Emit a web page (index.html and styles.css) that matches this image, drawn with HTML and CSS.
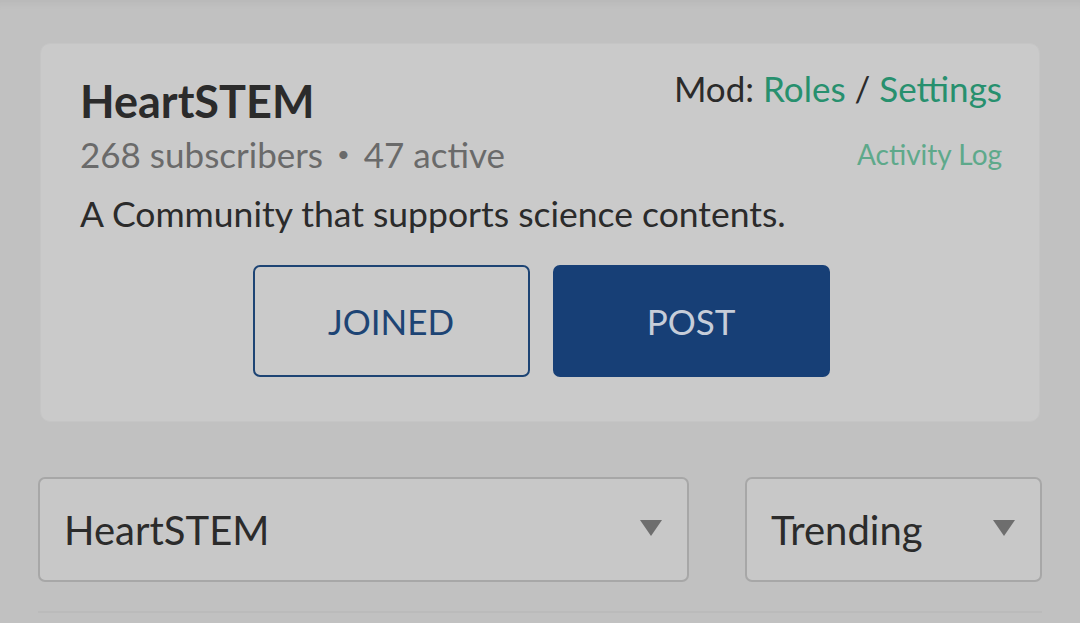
FILE: index.html
```html
<!DOCTYPE html>
<html>
<head>
<meta charset="utf-8">
<link rel="stylesheet" href="styles.css">
</head>
<body>
<div class="page">
  <section class="card">
    <div class="card-head">
      <div class="info">
        <h1 class="title">HeartSTEM</h1>
        <div class="stats"><span>268 subscribers</span><span class="dot">•</span><span>47 active</span></div>
      </div>
      <div class="mod">
        <div class="mod-links">Mod: <a class="link">Roles</a> / <a class="link">Settings</a></div>
        <a class="log">Activity Log</a>
      </div>
    </div>
    <p class="desc">A Community that supports science contents.</p>
    <div class="actions">
      <button class="btn btn-outline">JOINED</button>
      <button class="btn btn-solid">POST</button>
    </div>
  </section>
  <div class="filters">
    <div class="select select-wide"><span>HeartSTEM</span><span class="caret"></span></div>
    <div class="select select-narrow"><span>Trending</span><span class="caret"></span></div>
  </div>
  <div class="next-card"></div>
</div>
</body>
</html>
```

FILE: styles.css
```css
html, body {
  margin: 0;
  padding: 0;
}
body {
  background: #c1c1c1;
  font-family: Lato, "Noto Sans", sans-serif;
  width: 1080px;
  height: 623px;
  overflow: hidden;
  box-shadow: inset 0 10px 10px -8px rgba(0,0,0,0.06);
}
.page {
  padding: 43px 38px 0 38px;
}
.card {
  margin: 0 2px;
  background: #cacaca;
  border: 1px solid #c5c5c5;
  border-radius: 10px;
  padding: 23px 37px 44px 39px;
}
.card-head {
  display: flex;
  justify-content: space-between;
  align-items: flex-start;
}
.info {
  margin-top: 7px;
}
.title {
  margin: 0;
  font-size: 45px;
  line-height: 55px;
  font-weight: 700;
  color: #2b2b2b;
}
.stats {
  margin-top: 4px;
  font-size: 35px;
  line-height: 42px;
  color: #6a6a6a;
  display: flex;
  align-items: center;
}
.dot {
  font-size: 22px;
  margin: 0 14px;
}
.mod {
  display: flex;
  flex-direction: column;
  align-items: flex-end;
}
.mod-links {
  font-size: 35px;
  line-height: 43px;
  color: #2b2b2b;
}
.link {
  color: #27906e;
}
.log {
  margin-top: 26px;
  font-size: 28px;
  line-height: 36px;
  color: #5ea98b;
}
.desc {
  margin: 19px 0 0 0;
  font-size: 35.5px;
  line-height: 40px;
  color: #2b2b2b;
}
.actions {
  margin-top: 31px;
  display: flex;
  justify-content: center;
  gap: 23px;
}
.btn {
  width: 277px;
  height: 112px;
  border-radius: 7px;
  font-family: Lato, "Noto Sans", sans-serif;
  font-size: 35px;
  padding: 0;
}
.btn-outline {
  background: transparent;
  border: 2.5px solid #1d4474;
  color: #1d4474;
}
.btn-solid {
  background: #173f76;
  border: 2px solid #173f76;
  color: #c6cdd9;
}
.filters {
  margin-top: 55px;
  display: flex;
  justify-content: space-between;
}
.select {
  box-sizing: border-box;
  height: 105px;
  border: 2px solid #a7a7a7;
  border-radius: 7px;
  background: #c8c8c8;
  display: flex;
  align-items: center;
  justify-content: space-between;
  padding: 0 25px 0 24px;
  font-size: 40px;
  color: #2b2b2b;
}
.select-wide {
  width: 651px;
}
.select-narrow {
  width: 297px;
}
.caret {
  width: 0;
  height: 0;
  border-left: 11px solid transparent;
  border-right: 11px solid transparent;
  border-top: 16px solid #6e6e6e;
  margin-top: -3px;
}
.next-card {
  margin-top: 29px;
  border-top: 2px solid #bbbbbb;
  height: 20px;
}
```
